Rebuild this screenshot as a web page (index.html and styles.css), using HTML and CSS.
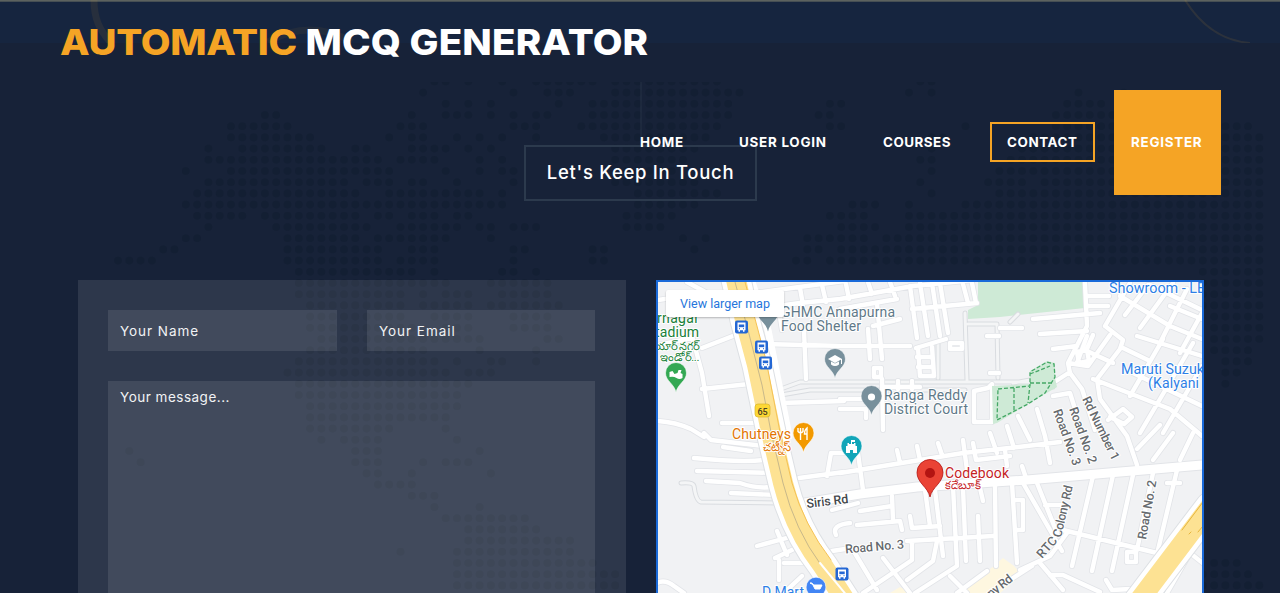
FILE: index.html
```
<!DOCTYPE html>
<html lang="en">
<head>
<meta charset="utf-8">
<title>Automatic MCQ Generator</title>
<link rel="stylesheet" href="styles.css">
</head>
<body>
<div class="page">
  <svg class="backdrop" viewBox="0 0 1280 593" aria-hidden="true">
    <rect width="1280" height="43" fill="#16253f"/>
    <rect width="1280" height="1.7" fill="#5c625f"/>
    <g fill="none" stroke="#f5a425" clip-path="url(#band)">
      <path d="M94 0C94 18 99 30 112 44" stroke-width="7" opacity=".08"/>
      <path d="M268 42Q310 18 352 42" stroke-width="7" opacity=".06"/>
      <path d="M1185 0Q1210 40 1250 43" stroke-width="2" opacity=".1"/>
    </g>
    <clipPath id="band"><rect width="1280" height="43"/></clipPath>
    <clipPath id="section"><rect y="82" width="1280" height="511"/></clipPath>
    <!-- dotted world map: one unit is one dot -->
    <g clip-path="url(#section)">
    <g class="dots" transform="translate(231 115) scale(11.3 11.2)">
      <path d="M18-3h1.1M21-3h.1M24-3h.1M27-3h5.1M34-3h9.1M61-3h1.1M17-2h.1M25-2h.1M28-2h2.1M34-2h11.1M60-2h.1M62-2h.1M75-2h.1M79-2h.1M19-1h.1M21-1h.1M23-1h.1M29-1h.1M32-1h12.1M53-1h1.1M74-1h3.1M3 0h1.1M16 0h.1M19 0h2.1M23 0h.1M25 0h.1M27 0h1.1M32 0h12.1M52 0h1.1M73 0h6.1M85 0h2.1M0 1h5.1M15 1h2.1M25 1h2.1M31 1h12.1M53 1h1.1M65 1h.1M73 1h7.1M84 1h6.1M0 2h7.1M14 2h.1M16 2h1.1M20 2h.1M22 2h.1M24 2h.1M27 2h.1M33 2h9.1M62 2h1.1M71 2h20.1M-2 3h.1M1 3h7.1M11 3h1.1M16 3h3.1M21 3h.1M23 3h.1M34 3h7.1M62 3h.1M70 3h21.1M-2 4h15.1M15 4h3.1M22 4h.1M24 4h.1M34 4h6.1M61 4h1.1M69 4h22.1M-4 5h.1M0 5h14.1M19 5h.1M22 5h.1M24 5h1.1M35 5h4.1M62 5h.1M68 5h23.1M-2 6h12.1M12 6h2.1M16 6h1.1M20 6h.1M25 6h.1M34 6h7.1M61 6h.1M67 6h3.1M72 6h19.1M-3 7h14.1M14 7h8.1M24 7h.1M36 7h7.1M62 7h.1M68 7h23.1M-4 8h28.1M36 8h5.1M55 8h2.1M60 8h.1M65 8h26.1M-3 9h4.1M3 9h8.1M13 9h1.1M16 9h2.1M20 9h1.1M35 9h4.1M53 9h3.1M60 9h31.1M-2 10h.1M4 10h8.1M15 10h5.1M22 10h1.1M25 10h2.1M35 10h3.1M54 10h3.1M60 10h31.1M-4 11h1.1M5 11h6.1M13 11h6.1M23 11h.1M40 11h.1M42 11h.1M51 11h5.1M58 11h33.1M-6 12h1.1M5 12h8.1M16 12h2.1M25 12h1.1M32 12h1.1M41 12h.1M51 12h1.1M54 12h37.1M-10 13h3.1M5 13h8.1M15 13h3.1M25 13h.1M32 13h1.1M50 13h1.1M53 13h38.1M6 14h10.1M18 14h.1M24 14h1.1M27 14h.1M86 14h5.1M6 15h13.1M23 15h5.1M86 15h5.1M6 16h9.1M17 16h.1M19 16h2.1M24 16h4.1M86 16h5.1M7 17h8.1M17 17h4.1M23 17h6.1M86 17h5.1M7 18h8.1M18 18h3.1M25 18h3.1M87 18h4.1M7 19h9.1M19 19h2.1M25 19h3.1M87 19h4.1M8 20h9.1M18 20h4.1M28 20h1.1M87 20h4.1M7 21h10.1M22 21h.1M27 21h.1M87 21h3.1M6 22h12.1M20 22h.1M23 22h1.1M27 22h.1M88 22h2.1M5 23h14.1M21 23h2.1M88 23h1.1M6 24h15.1M88 24h.1M6 25h14.1M7 26h13.1M7 27h12.1M7 28h7.1M19 28h.1M8 29h.1M10 29h3.1M20 29h.1M-9 30h.1M11 30h2.1M22 30h.1M-8 31h.1M11 31h2.1M17 31h.1M19 31h2.1M12 32h1.1M16 32h.1M23 32h.1M13 33h3.1M16 34h2.1M18 35h.1M22 35h.1M19 36h7.1M21 37h6.1M21 38h9.1M15 39h.1M20 39h10.1M20 40h12.1M20 41h14.1M20 42h14.1M87 40h2.1M86 41h4.1M85 42h6.1"/>
    </g>
    </g>
  </svg>

  <header class="header">
    <h1 class="brand"><em>AUTOMATIC</em> MCQ GENERATOR</h1>
    <nav class="nav">
      <a class="home">HOME</a>
      <a class="login">USER LOGIN</a>
      <a class="courses">COURSES</a>
      <a class="contact">CONTACT</a>
      <a class="register">REGISTER</a>
    </nav>
  </header>

  <section class="touch">
    <div class="stem"></div>
    <h2 class="heading"><span>Let's Keep In Touch</span></h2>
    <div class="columns">
      <form class="form">
        <input class="field" type="text" placeholder="Your Name">
        <input class="field" type="text" placeholder="Your Email">
        <textarea class="field message" placeholder="Your message..."></textarea>
      </form>
      <div class="map">
        <svg class="map-art" viewBox="658 282 544 340">
          <defs>
            <path id="streets" d="M692 336L702 373 709 416M702 389L749 384M657 421Q675 422 691 429L704 437M722 423H757M702 348L738 334M658 300L684 296 700 310M687 282L720 300M658 345L692 338M764 344L844 346H910M804 330L806 379M754 293L844 281M754 309L800 303 840 299 913 286 973 280M781 403L844 401M777 298L782 330M800 288L803 305M822 285L826 302M846 284L849 299M868 282L872 294M890 282L895 296M840 309L897 299M877 303L882 359M900 319L873 326M868 329L870 359M910 286L917 338M920 283L928 336M932 283L940 336M940 283L948 333M912 309L977 303M963 284L968 303M972 283L976 303M916 348L946 339M918 348L920 376H934L932 347M917 357H932M918 367H933M950 343H962V349H950ZM1000 328H1022M987 336H999M990 373H999M874 368H881V377H874ZM882 379L883 430M883 387H920M898 381V389M912 381V389M974 391L988 388 992 384V422H974ZM840 409H866V418M840 399H862M1007 426L1014 448M1018 416L1030 440M1085 283L1087 326 1068 363 1070 373 1082 389 1095 430M1087 296H1109M1087 306H1108M1033 319L1100 313M1040 334L1087 331M1053 349L1077 346M1056 381L1070 372M1068 363L1088 366 1110 335M1077 352L1087 350 1089 361 1079 363ZM1087 336L1077 363M1093 335L1086 351M1105 326L1130 283M1105 326L1123 340 1120 349 1097 379 1100 399 1127 436 1137 465M1140 328L1173 283M1160 343L1187 289M1180 353L1202 313M1130 396L1163 339M1125 315L1148 285M1140 433L1193 343M1163 433L1202 366M1120 296L1170 326 1202 339M1137 336L1202 356M1170 306L1202 319M1087 351L1113 363M1123 348L1150 361M1093 379L1170 409 1202 436M1133 373L1202 406M1150 285L1202 310M1037 409L1045 436 1050 463M1053 396L1070 393 1075 409M1108 420L1123 409 1132 417 1124 424 1110 417M1153 460L1173 433M1180 460L1193 433M1137 449L1160 425M1093 476L1072 566M1113 475L1092 571M1133 475L1112 571M1153 473L1137 550M1177 470L1158 550M1063 530L1157 553M1023 483L1062 551M1037 483L1057 533M1045 505H1061M1020 570L1050 556 1067 533M1040 563L1063 590M1050 575L1063 575 1100 592M1010 580L1032 566M1167 483H1180M1190 553L1204 564M1167 593L1190 553M1127 552H1136V562H1127ZM1106 580L1112 590 1130 589M840 473L963 453 1027 446 1060 442M799 478L844 472M858 453L863 490M897 450L900 463M917 446L920 460M938 443L942 455M963 440L967 470M990 433L997 453M973 443L976 460 1010 456M1005 450L1007 466M860 511L892 506M857 525L900 521 902 530M892 496L893 520M925 490L930 526M910 516L912 528 940 526M935 490L943 556M953 486L957 566 915 593M963 488L966 561M978 516L980 561M995 486L996 566M907 541L993 536M912 543V560L863 593M937 541L933 561 907 580M853 550L877 590M883 558L910 593M950 576L967 593M957 593L987 571M1012 483L1017 563M1022 466L1027 481M1016 500H1023V530H1016M980 488L983 501M694 458Q725 461 744 461T774 458M697 471L777 473M706 481L740 483Q760 490 777 486M731 493L777 495M704 433L711 440 764 446M723 447L751 451M757 546L794 536M777 531L787 555M784 563H814M779 560V580M775 558L794 549M787 590L802 576M657 583Q665 579 674 586L684 593M831 453L827 476M831 453H848M836 535Q831 525 850 523M832 551L845 549M832 510L858 503"/>
            <path id="fine" d="M681 483Q693 482 694 486Q696 501 701 502L780 503M767 394L800 382 1040 382 1053 387M781 395L810 390H965M965 313L967 380M968 324H997L998 378M1010 322L1018 314M938 344V378M1013 383L1030 380"/>
            <path id="pin" d="M0 18.500C-1.500 10-10.500 7-10.500-1A10.500 10.500 0 1 1 10.500-1C10.500 7 1.500 10 0 18.500Z"/>
            <g id="bus">
              <rect x="-6.5" y="-6.5" width="13" height="13" rx="2" fill="#2467d4"/>
              <path d="M-4-4.5H4V3.2H3V4.7H1.5V3.2H-1.5V4.7H-3V3.2H-4Z" fill="#fff"/>
              <path d="M-2.7-2.5H2.7V.2H-2.7Z" fill="#2467d4"/>
              <path d="M-2.5 1.7h1M1.5 1.7h1" stroke="#2467d4"/>
            </g>
          </defs>
          <rect x="658" y="282" width="544" height="340" fill="#f1f2f4"/>
          <path d="M978 282H1083L1085 308 1000 317 968 319V310L978 305Z" fill="#ceead6"/>
          <path d="M890 593L900 587 910 593ZM962 593L1003 558 1014 566 1022 575 1000 593Z" fill="#fef7e0"/>
          <g fill="none" stroke-linejoin="round" stroke-linecap="round">
            <use href="#fine" stroke="#d9dce0" stroke-width="5"/>
            <use href="#fine" stroke="#f4f5f6" stroke-width="3"/>
            <use href="#streets" stroke="#e2e4e8" stroke-width="6"/>
            <path d="M799 504L860 494 917 487 1027 480 1202 465" stroke="#e2e4e8" stroke-width="11"/>
            <use href="#streets" stroke="#fff" stroke-width="4.4"/>
            <path d="M799 504L860 494 917 487 1027 480 1202 465" stroke="#fff" stroke-width="9"/>
            <path d="M752 282L768 330 776 370 789 436" stroke="#fff" stroke-width="7"/>
            <path d="M735 275L745 320 757 365 771 432 783 483Q795 530 823 566L845 600M1138 602L1210 507" stroke="#dde0e4" stroke-width="31"/>
            <path d="M735 275L745 320 757 365 771 432 783 483Q795 530 823 566L845 600M1138 602L1210 507" stroke="#fff" stroke-width="29"/>
            <path d="M735 275L745 320 757 365 771 432 783 483Q795 530 823 566L845 600M1138 602L1210 507" stroke="#fde293" stroke-width="20"/>
            <path d="M745 282L754 315 766 360 780 432 792 483Q804 525 831 560" stroke="#f5c255" stroke-width="1"/>
            <path d="M735 282L748 330 762 385 771 432 783 483Q795 530 821 565" stroke="#c8b88a" stroke-width="1"/>
            <path d="M820 563L848 597" stroke="#fff" stroke-width="2"/>
            <path d="M1182 530L1203 502M1198 532L1203 526M1189 534L1191 532" stroke="#e8b53c" stroke-width="1"/>
          </g>
          <path d="M992 386L1030 384 1030 371 1047 361 1055 363 1055 378 1057 387 1028 404 997 423 993 424Z" fill="#ceead6"/>
          <path d="M998 389L1030 386V372L1047 362 1054 364 1055 377 1045 393 1028 404 997 420ZM1014 388V410M1030 383H1054M1030 374L1050 366M1030 384L1028 403" fill="none" stroke="#45a866" stroke-width="1.3" stroke-dasharray="4 2"/>

          <use href="#pin" transform="translate(676 374)" fill="#34a853" stroke="#fff" stroke-width=".6"/>
          <path d="M669.500 372l3-1 2 3 3-1 1-3h3l-1 3 2 1v4q-3 2-6 0t-7-1z" fill="#fff"/>
          <use href="#pin" transform="translate(768 313)" fill="#78909c"/>
          <use href="#pin" transform="translate(835 360)" fill="#78909c" stroke="#fff" stroke-width=".6"/>
          <path d="M828 359l7-4 7 4-7 4zM831 361.500v3q4 3 8 0v-3l-4 2zM841 359h1v5h-1z" fill="#fff"/>
          <use href="#pin" transform="translate(871.500 397)" fill="#78909c" stroke="#fff" stroke-width=".6"/>
          <circle cx="871.500" cy="397" r="3.600" fill="#fff"/>
          <use href="#pin" transform="translate(803.500 434)" fill="#f29900" stroke="#fff" stroke-width=".6"/>
          <path d="M800.500 428v12M798 428v3.500q2.500 2.500 5 0V428M807 440V428q-2.500 2-2.500 6H807" fill="none" stroke="#fff" stroke-width="1.400"/>
          <use href="#pin" transform="translate(851.500 447)" fill="#12a5b8" stroke="#fff" stroke-width=".6"/>
          <path d="M846 453v-7h1.500v-3h1.500v1h2v-4h4v2h-3v2h2v-1h1.500v3h1.500v7h-4v-3h-3v3z" fill="#fff"/>
          <use href="#bus" x="741.500" y="327"/>
          <use href="#bus" x="761.500" y="347"/>
          <use href="#bus" x="765.500" y="363"/>
          <use href="#bus" x="842" y="574"/>
          <rect x="755" y="404" width="15" height="13" rx="3" fill="#fdd835" stroke="#d8b52c" stroke-width=".7"/>
          <text x="757.500" y="414.500" class="shield">65</text>
          <use href="#pin" transform="translate(816 588) scale(.94)" fill="#4285f4" stroke="#fff" stroke-width=".6"/>
          <path d="M810 583h2l3 6h5l2-4h-8z" fill="#fff" stroke="#fff" stroke-width="1"/>
          <path d="M930 497C928 487 917 483 917 472.500A13 13 0 0 1 943 472.500C943 483 932 487 930 497Z" fill="#ea4335" stroke="#b31412" stroke-width=".8"/>
          <circle cx="930" cy="473" r="5" fill="#b31412"/>

          <g class="label">
            <g fill="#5f7988">
              <text x="781" y="316.500" textLength="114">GHMC Annapurna</text>
              <text x="781" y="330.500" textLength="80">Food Shelter</text>
              <text x="884" y="399.500" textLength="83">Ranga Reddy</text>
              <text x="884" y="413.500" textLength="84">District Court</text>
            </g>
            <g fill="#2e7fe6">
              <text x="1109" y="292.500" textLength="97" lengthAdjust="spacingAndGlyphs">Showroom - LB</text>
              <text x="1121" y="373.500" textLength="83" lengthAdjust="spacingAndGlyphs">Maruti Suzuk</text>
              <text x="1148" y="387.500" textLength="51">(Kalyani</text>
              <text x="762" y="597" textLength="42">D Mart</text>
            </g>
            <g fill="#188038">
              <text x="657" y="323" textLength="42">rnagar</text>
              <text x="655" y="337" textLength="44">tadium</text>
              <text x="653" y="349.500" class="local" textLength="46">యార్ నగర్</text>
              <text x="660" y="360.500" class="local" textLength="39">ఇండోర్...</text>
            </g>
            <g fill="#e37400">
              <text x="732" y="438.500" textLength="59">Chutneys</text>
              <text x="763" y="450.500" class="local" textLength="28">చట్నీస్</text>
            </g>
            <g fill="#c5221f">
              <text x="945" y="478" textLength="64">Codebook</text>
              <text x="945" y="489" class="local" textLength="36">కదేబూక్</text>
            </g>
          </g>
          <g class="road">
            <text transform="translate(807 508) rotate(-7)" textLength="42">Siris Rd</text>
            <g fill="#666a6e">
              <text transform="translate(845.500 553.500) rotate(-5)" textLength="59">Road No. 3</text>
              <text transform="translate(1042 559) rotate(-48)" textLength="24">RTC</text>
              <text transform="translate(1061 538) rotate(-77)" textLength="53">Colony Rd</text>
              <text transform="translate(1146 540) rotate(-80)" textLength="60">Road No. 2</text>
              <text transform="translate(1053 411) rotate(70)" textLength="59">Road No. 3</text>
              <text transform="translate(1069 409) rotate(70)" textLength="59">Road No. 2</text>
              <text transform="translate(1082 399) rotate(64)" textLength="69">Rd Number 1</text>
              <text transform="translate(986 602) rotate(-38)" textLength="35">ony Rd</text>
            </g>
          </g>
        </svg>
        <a class="larger">View larger map</a>
      </div>
    </div>
  </section>
</div>
</body>
</html>
```
FILE: styles.css
```
* { box-sizing: border-box; }
body { margin: 0; background: #172238; font-family: Inter, "Open Sans", sans-serif; color: #fff; }
.page { position: relative; height: 593px; overflow: hidden; }
.backdrop { position: absolute; left: 0; top: 0; width: 1280px; height: 593px; }
.dots { fill: none; stroke: #101c2c; stroke-width: .68; stroke-linecap: round; stroke-dasharray: 0 1; opacity: .4; }
.header { position: absolute; z-index: 2; left: 0; top: 0; width: 100%; padding: 17px 59px 0 60px; }
.brand { width: 560px; margin: 0; height: 73px; line-height: 50px; font-size: 36px; font-weight: 800; letter-spacing: .15px; white-space: nowrap; transform: scaleX(1.07); transform-origin: left; }
.brand em { font-style: normal; color: #f5a425; letter-spacing: -.3px; }
.nav { display: flex; justify-content: flex-end; align-items: center; height: 105px; font-size: 13.4px; font-weight: 700; letter-spacing: .75px; white-space: nowrap; }
.nav a { display: block; line-height: 16px; margin-bottom: 2px; }
.home { width: 99px; }
.login { width: 144px; }
.courses { width: 107px; letter-spacing: .5px; }
.nav .contact { width: 105px; height: 40px; padding: 10px 0 0 15px; border: 2px solid #f5a425; letter-spacing: .6px; }
.nav .register { width: 107px; height: 105px; margin: 0 0 0 19px; padding: 44px 0 0 17px; background: #f5a425; }
.touch { position: relative; padding-top: 82px; }
.stem { width: 1px; height: 63px; margin: 0 auto; background: #263347; transform: translateX(.5px); }
.heading { display: flex; justify-content: center; margin: 0 0 79px; font-weight: 500; }
.heading span { width: 233px; height: 56px; margin-left: 1px; border: 2px solid #2c3a4d; text-align: center; font-size: 18.5px; line-height: 51px; letter-spacing: .7px; white-space: nowrap; }
.columns { display: grid; grid-template-columns: 547.5px 548px; column-gap: 30.5px; padding-left: 78px; height: 350px; }
.form { display: grid; grid-template-columns: 229px 228px; grid-template-rows: 41px 250px; gap: 30px; padding: 30px; background: rgba(250,250,250,.1); }
.field { width: 100%; height: 100%; margin: 0; padding: 0 12px; border: 0; border-radius: 0; background: rgba(250,250,250,.1); color: #fff; font: 400 13.5px Inter, sans-serif; letter-spacing: .95px; resize: none; }
.field::placeholder { color: #f1f2f4; opacity: 1; }
.message { grid-column: 1 / 3; padding-top: 8px; letter-spacing: .5px; }
.map { position: relative; border: 2px solid #1a6ad9; overflow: hidden; }
.map-art { display: block; width: 544px; height: 340px; }
.larger { position: absolute; left: 8px; top: 8px; width: 118px; height: 27px; background: #fff; border-radius: 2px; box-shadow: 0 1px 2px rgba(0,0,0,.25); color: #2676dc; font: 12.5px/27px Roboto, sans-serif; text-align: center; }
.label { font: 14px Roboto, "Noto Sans", sans-serif; stroke: #fff; stroke-width: 2px; stroke-linejoin: round; }
.label text { paint-order: stroke; }
.label .local { font-size: 11.5px; }
.road { font: 500 12.5px Roboto, sans-serif; fill: #44484c; stroke: #fff; stroke-width: 2px; }
.road text { paint-order: stroke; }
.shield { font: 500 9px Roboto, sans-serif; fill: #4a4020; }
```
